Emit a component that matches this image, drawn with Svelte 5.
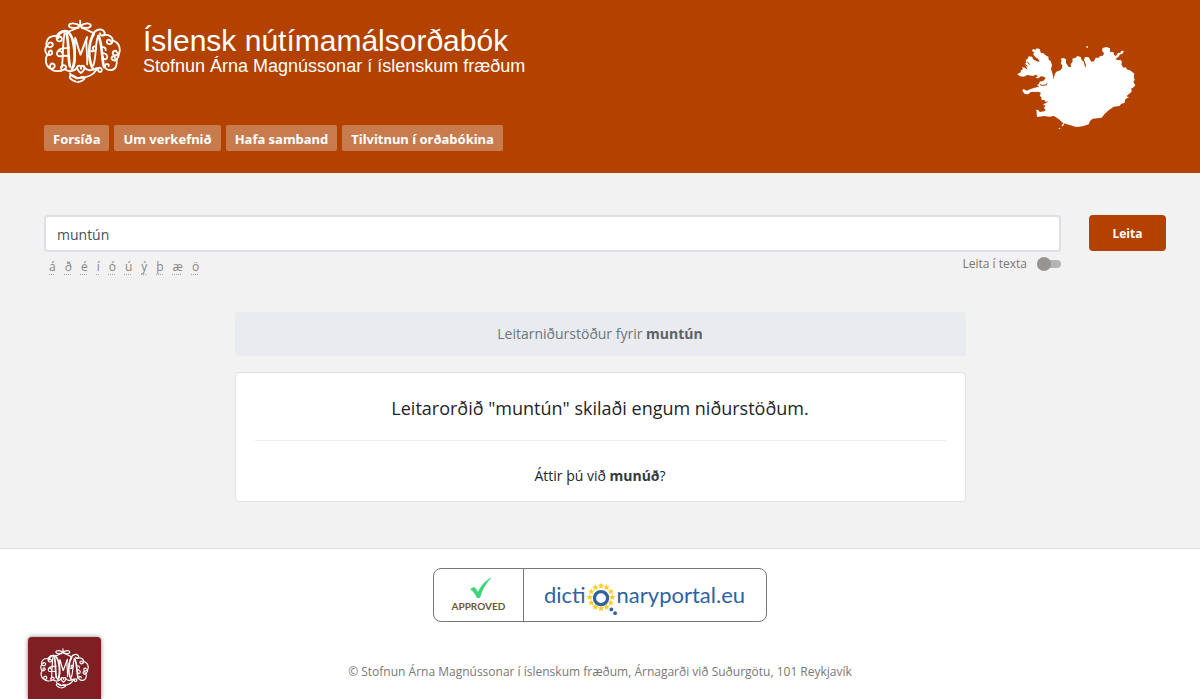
<script lang="ts">
  const navLinks = [
    { label: "Forsíða", href: "#forsida" },
    { label: "Um verkefnið", href: "#um" },
    { label: "Hafa samband", href: "#samband" },
    { label: "Tilvitnun í orðabókina", href: "#tilvitnun" }
  ];

  const letters = ["á", "ð", "é", "í", "ó", "ú", "ý", "þ", "æ", "ö"];

  // Twelve stars in a ring, as on the portal logo
  const stars = Array.from({ length: 12 }, (_, i) => {
    const a = (i * Math.PI) / 6;
    return { x: 16 + 12 * Math.sin(a), y: 14 - 12 * Math.cos(a) };
  });

  let query = $state("muntún");
  let searched = $state("muntún");
  let fullText = $state(false);

  function search(e: SubmitEvent) {
    e.preventDefault();
    searched = query;
  }
</script>

{#snippet monogram()}
  <svg class="monogram" viewBox="42 26 232 194" aria-hidden="true">
    <g fill="none" stroke="currentColor" stroke-linecap="round" stroke-linejoin="round">
      <g stroke-width="5.5">
        <!-- crown -->
        <path d="M151 30v14M151 47c-12-11-34-11-34-2s22 9 34 2c12 7 32 7 32-2s-20-9-32 2" />
        <path d="M146 52c-12 2-22 10-36 12M155 52c14 2 20 10 34 14" />
        <!-- left scrolls -->
        <path d="M112 62c-18-4-34 8-32 22 2 12 17 10 16 0-1-7-9-7-11-2" />
        <path d="M80 76c-18-2-30 8-31 22-1 12 14 16 19 7 3-9-9-13-13-5" />
        <path d="M50 106c-6 8-6 20 2 26 9 5 17-2 14-9-4-6-12-1-9 6" />
        <path d="M52 132c-8 14-6 34 8 42 11 4 18-6 12-13-8-5-15 3-11 11 8 14 30 12 44 4 6-4 4-12-4-12-8 1-10 8-6 14" />
        <!-- right scrolls -->
        <path d="M220 74c18-4 30 6 29 18-2 12-18 11-18 1 1-7 10-7 12-1" />
        <path d="M248 90c15 2 24 16 22 32-2 14-18 17-21 6 0-8 11-10 13-2" />
        <path d="M268 130c0 8-4 12-8 17 4 14-1 30-16 32-13 1-20-6-18-14 3-7 13-5 11 2" />
        <path d="M262 147c-8 6-18 2-16-6 3-6 11-4 10 3" />
        <!-- crossbars -->
        <path d="M117 138c-14-8-34 8-36-8 0-10 13-12 15-3M84 122c4-12 22-8 34-10" />
        <path d="M218 128c12 0 16 8 14 14-4 8-14 4-12-3M218 110c8-1 10 4 10 9" />
        <path d="M190 116c-4-7 6-12 9-5 2 8-8 14-15 10" />
        <!-- thin legs -->
        <path d="M104 68c-6 30-4 70-8 102M205 76c-10 26-4 56-14 88" />
        <path d="M136 84c-4 26 4 58-4 84M170 84c-2 26 4 56 2 78" />
        <!-- base knots -->
        <path d="M153 188c-9-7-14-16-9-21 6-4 11 1 10 8-4-6 2-11 8-8 6 5-1 15-9 21z" />
        <path d="M104 176c18 14 36 2 39-8M161 167c6 12 22 18 40 6" />
        <path d="M138 214c-12-3-24-13-16-19 10-5 17 12 27 8 22 0 42-10 51-25 6-10 18-6 16 2-3 8-13 5-10-2" />
        <path d="M144 215c10-2 24-8 19-14-8-5-15 6-25 2-8-4-16-8-18-14" />
      </g>
      <g stroke-width="8">
        <path d="M84 82c0-16 20-26 32-16 18 16 25 84 10 110" />
        <path d="M110 70c8 26 3 66 10 98" />
        <path d="M136 82c6 16 10 36 16 50 8-18 12-34 20-52" stroke-width="6" />
        <path d="M192 70c-16 24-20 74-2 106" />
        <path d="M186 82c4-26 34-34 39-15 0 10-13 11-14 2" stroke-width="6" />
        <path d="M206 76c13 24 8 64 17 94" />
      </g>
    </g>
  </svg>
{/snippet}

<header>
  <div class="brand-row">
    <a class="brand" href="#forsida">
      {@render monogram()}
      <span class="titles">
        <span class="title">Íslensk nútímamálsorðabók</span>
        <span class="subtitle">Stofnun Árna Magnússonar í íslenskum fræðum</span>
      </span>
    </a>
    <svg class="iceland" viewBox="35 33 357 252" role="img" aria-label="Ísland">
      <path
        fill="#fff"
        d="M36 118L47 111 46 107 53 102 50 96 58 98 66 104 63 95 58 87 63 83 61 76 68 70 70 64 80 65 85 74 98 80 103 79 98 71 90 66 83 57 88 53 80 48 83 42 91 44 94 40 103 42 107 55 113 54 123 62 130 66 129 72 136 79 140 90 137 102 141 114 145 133 148 118 153 110 165 106 170 100 171 92 166 84 169 77 166 71 175 69 182 73 182 84 190 96 197 96 196 87 202 80 201 71 211 68 216 63 226 66 229 75 235 80 240 98 242 90 236 74 239 66 250 67 258 80 266 79 271 68 281 68 284 63 293 62 296 54 290 48 292 39 303 36 314 40 314 50 325 52 326 60 332 63 338 54 345 53 348 47 356 48 351 56 343 59 340 65 330 72 338 76 345 74 350 80 348 88 354 98 362 97 364 103 376 107 387 116 385 125 388 135 384 141 390 151 383 158 378 160 379 170 370 178 364 183 366 188 359 194 358 203 347 207 343 213 325 215 310 226 297 238 289 248 262 251 254 258 250 268 232 274 213 276 193 270 173 264 160 252 146 243 132 245 117 243 95 246 93 224 99 225 103 231 117 229 121 224 116 219 120 212 113 208 121 205 131 199 121 201 117 195 108 195 109 189 103 181 107 174 100 170 76 171 69 178 58 177 51 167 54 162 64 167 76 162 103 154 94 151 101 147 103 140 114 137 121 130 116 125 107 124 99 130 90 129 98 123 91 119 83 123 66 120 56 125 44 124zM243 34h5v4h-5zM364 185h5v4h-5zM169 270l6-5 1 4-6 6zM160 280l4-2 1 3-4 2z"
      />
      <path fill="none" stroke="#b34200" stroke-width="3" d="M104 149l6 2 13-1 2-5M58 87l9 7M66 82l8 7" />
    </svg>
  </div>
  <nav>
    {#each navLinks as link}
      <a href={link.href}>{link.label}</a>
    {/each}
  </nav>
</header>

<main>
  <form onsubmit={search}>
    <div class="field">
      <input class="query" type="text" aria-label="Leitarorð" bind:value={query} />
      <div class="below">
        <div class="letters">
          {#each letters as letter}
            <button type="button" onclick={() => (query += letter)}>{letter}</button>
          {/each}
        </div>
        <label class="toggle">
          <span>Leita í texta</span>
          <input type="checkbox" bind:checked={fullText} />
        </label>
      </div>
    </div>
    <button class="submit" type="submit">Leita</button>
  </form>

  <section class="results">
    <div class="summary">Leitarniðurstöður fyrir <strong>{searched}</strong></div>
    <div class="card">
      <p class="none">Leitarorðið "{searched}" skilaði engum niðurstöðum.</p>
      <hr />
      <p class="suggest">Áttir þú við <a href="#munud">munúð</a>?</p>
    </div>
  </section>
</main>

<footer>
  <a class="portal" href="#dictionaryportal">
    <span class="approved">
      <svg width="24" height="22" viewBox="0 0 24 22" aria-hidden="true">
        <path fill="#3fd47a" d="M1 12l4-2c2 1 3 3 4 5C12 8 17 3 23 0c-6 6-10 13-12 21H8C6 17 4 14 1 12z" />
      </svg>
      <span>APPROVED</span>
    </span>
    <span class="portal-name">
      <span>dicti</span>
      <svg width="33" height="34" viewBox="0 0 33 34" aria-hidden="true">
        {#each stars as star}
          <path
            fill="#fc2"
            transform="translate({star.x} {star.y})"
            d="M0-3.4l.9 2.2H3.4L1.5.5 2.2 3 0 1.6-2.2 3-1.5.5-3.4-1.2h2.5z"
          />
        {/each}
        <circle cx="16" cy="15" r="7" fill="#fff" stroke="#2f62a0" stroke-width="3.5" />
        <circle cx="27" cy="27" r="2" fill="#2f62a0" />
        <circle cx="31" cy="31" r="2" fill="#2f62a0" />
      </svg>
      <span>naryportal.eu</span>
    </span>
  </a>
  <p>© Stofnun Árna Magnússonar í íslenskum fræðum, Árnagarði við Suðurgötu, 101 Reykjavík</p>
</footer>

<a class="corner" href="#arnastofnun" aria-label="Stofnun Árna Magnússonar">
  {@render monogram()}
</a>

<style>
  :global(body) {
    margin: 0;
    overflow: hidden;
    background: #fff;
    color: #212529;
    font-family: "Open Sans", "Noto Sans", sans-serif;
    font-size: 14px;
    line-height: 20px;
  }

  a {
    color: inherit;
    text-decoration: none;
  }

  header {
    box-sizing: border-box;
    min-height: 173px;
    padding: 19px 44px 22px;
    background: #b34200;
    color: #fff;
  }

  .brand-row {
    display: flex;
    justify-content: space-between;
    align-items: flex-start;
    height: 106px;
  }

  .brand {
    display: flex;
    gap: 22px;
  }

  .monogram {
    display: block;
    width: 77px;
    height: 65px;
    color: #fff;
  }

  .titles {
    display: flex;
    flex-direction: column;
    padding-top: 5px;
    font-family: "Liberation Sans", Arial, sans-serif;
  }

  .title {
    font-size: 30px;
    line-height: 33px;
  }

  .subtitle {
    font-size: 18px;
    line-height: 18px;
  }

  .iceland {
    width: 119px;
    height: 84px;
    margin: 27px 20px 0 0;
  }

  nav {
    display: flex;
    gap: 5px;
  }

  nav a {
    padding: 4px 9px 2px;
    border-radius: 2px;
    background: #c87b4c;
    font-family: "Noto Sans", "Open Sans", sans-serif;
    font-size: 13px;
    font-weight: 700;
  }

  main {
    padding: 42px 34px 46px 44px;
    border-bottom: 1px solid #e3e3e3;
    background: #f2f2f2;
  }

  form {
    display: flex;
    align-items: flex-start;
    gap: 28px;
  }

  .field {
    flex: 1;
  }

  .query {
    box-sizing: border-box;
    display: block;
    width: 100%;
    height: 37px;
    padding: 2px 11px 0;
    border: 2px solid #dee0e5;
    border-radius: 4px;
    background: #fff;
    color: #495057;
    font: inherit;
    font-size: 14px;
  }

  .below {
    display: flex;
    justify-content: space-between;
    align-items: flex-start;
    padding: 2px 0 0 5px;
    color: #868686;
    font-size: 12px;
  }

  .letters {
    display: flex;
    gap: 9px;
    padding-top: 3px;
  }

  .letters button {
    padding: 0;
    border: 0;
    background: none;
    color: inherit;
    font: inherit;
    line-height: 20px;
    text-decoration: underline dotted #aaa;
    text-underline-offset: 3px;
    cursor: pointer;
  }

  .toggle {
    display: flex;
    align-items: center;
    gap: 10px;
    color: #777;
  }

  .toggle input {
    appearance: none;
    position: relative;
    width: 24px;
    height: 8px;
    margin: 0;
    border-radius: 4px;
    background: #b5b3b3;
  }

  .toggle input::before {
    content: "";
    position: absolute;
    top: -3px;
    left: 0;
    width: 14px;
    height: 14px;
    border-radius: 50%;
    background: #979494;
  }

  .toggle input:checked::before {
    left: 10px;
    background: #b34200;
  }

  .submit {
    width: 77px;
    height: 36px;
    padding: 2px 0 0;
    border: 0;
    border-radius: 4px;
    background: #b34200;
    color: #fff;
    font: inherit;
    font-size: 12px;
    font-weight: 700;
    cursor: pointer;
  }

  .results {
    max-width: 731px;
    margin: 35px auto 0;
    /* evens out the narrower right padding of main */
    padding-right: 10px;
  }

  .summary {
    padding: 12px;
    border-radius: 4px;
    background: #e9ebef;
    color: #6c757d;
    text-align: center;
  }

  .summary strong {
    color: #5c6268;
  }

  .card {
    margin-top: 16px;
    padding: 22px 19px 15px;
    border: 1px solid #dfe1e4;
    border-radius: 4px;
    background: #fff;
    text-align: center;
  }

  .card p {
    margin: 0;
  }

  .card .none {
    font-size: 18px;
    line-height: 26px;
  }

  .card hr {
    margin: 19px 0 25px;
    border: 0;
    border-top: 1px solid #eee;
  }

  .suggest a {
    color: #343a40;
    font-weight: 700;
  }

  footer {
    display: flex;
    flex-direction: column;
    align-items: center;
    padding-top: 19px;
  }

  .portal {
    display: flex;
    border: 1px solid #777;
    border-radius: 8px;
    background: #fff;
  }

  .approved {
    display: flex;
    flex-direction: column;
    align-items: center;
    width: 90px;
    padding: 8px 0;
    border-right: 1px solid #777;
    box-sizing: border-box;
    color: #6b5a30;
    font-family: Lato, sans-serif;
    font-size: 10px;
    font-weight: 700;
    line-height: 14px;
  }

  .approved svg {
    margin-left: 6px;
  }

  .portal-name {
    display: flex;
    align-items: center;
    padding: 0 21px 0 20px;
    color: #2f62a0;
    font-family: Lato, sans-serif;
    font-size: 22px;
  }

  .portal-name svg {
    width: 31px;
    margin-top: 10px;
  }

  footer p {
    margin: 40px 0 0;
    color: #777;
    font-size: 12px;
  }

  .corner {
    position: fixed;
    bottom: 0;
    left: 28px;
    padding: 11px 12px 10px;
    border-radius: 4px 4px 0 0;
    background: #7d1f23;
    box-shadow: 0 0 4px rgba(0, 0, 0, 0.5);
  }

  .corner .monogram {
    width: 49px;
    height: 41px;
  }
</style>
